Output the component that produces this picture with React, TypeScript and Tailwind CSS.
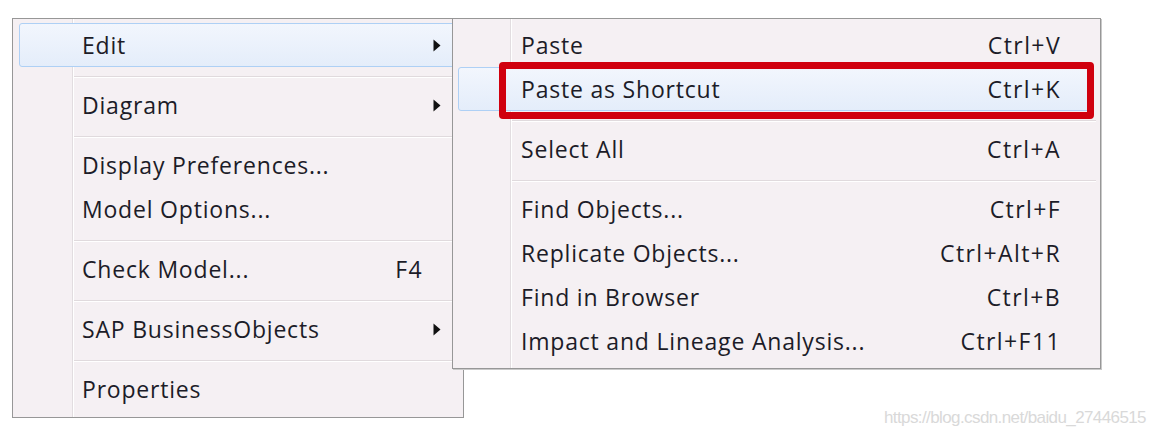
import React from 'react';

type Item =
  | { kind: 'sep' }
  | { kind: 'item'; label: string; shortcut?: string; sub?: boolean; active?: boolean };

const mainItems: Item[] = [
  { kind: 'item', label: 'Edit', sub: true, active: true },
  { kind: 'sep' },
  { kind: 'item', label: 'Diagram', sub: true },
  { kind: 'sep' },
  { kind: 'item', label: 'Display Preferences...' },
  { kind: 'item', label: 'Model Options...' },
  { kind: 'sep' },
  { kind: 'item', label: 'Check Model...', shortcut: 'F4' },
  { kind: 'sep' },
  { kind: 'item', label: 'SAP BusinessObjects', sub: true },
  { kind: 'sep' },
  { kind: 'item', label: 'Properties' },
];

const editItems: Item[] = [
  { kind: 'item', label: 'Paste', shortcut: 'Ctrl+V' },
  { kind: 'item', label: 'Paste as Shortcut', shortcut: 'Ctrl+K', active: true },
  { kind: 'sep' },
  { kind: 'item', label: 'Select All', shortcut: 'Ctrl+A' },
  { kind: 'sep' },
  { kind: 'item', label: 'Find Objects...', shortcut: 'Ctrl+F' },
  { kind: 'item', label: 'Replicate Objects...', shortcut: 'Ctrl+Alt+R' },
  { kind: 'item', label: 'Find in Browser', shortcut: 'Ctrl+B' },
  { kind: 'item', label: 'Impact and Lineage Analysis...', shortcut: 'Ctrl+F11' },
];

function Arrow() {
  return (
    <svg width="8" height="13" viewBox="0 0 8 13">
      <path d="M0.5 0.5 L7.5 6.5 L0.5 12.5 Z" fill="#111" />
    </svg>
  );
}

function Separator({ className }: { className: string }) {
  return (
    <div className={`h-[16px] pt-[9px] ${className}`}>
      <div className="h-px bg-[#e0dadd]" />
      <div className="h-px bg-white" />
    </div>
  );
}

function MainMenu() {
  return (
    <div className="w-[452px] h-[400px] border border-[#979797] bg-[#f5f0f3] pt-[4px] bg-[linear-gradient(to_right,transparent_59px,#e2dde0_59px,#e2dde0_60px,#ffffff_60px,#ffffff_61px,transparent_61px)]">
      {mainItems.map((it, i) =>
        it.kind === 'sep' ? (
          <Separator key={i} className="ml-[61px] mr-[11px]" />
        ) : (
          <div
            key={i}
            className={`mx-[6px] h-[44px] flex items-center pl-[62px] pr-[15px] rounded-[3px] border ${
              it.active
                ? 'border-[#aed0f5] bg-[linear-gradient(to_bottom,#f2f6fd,#e4edfa)]'
                : 'border-transparent'
            }`}
          >
            <span className="flex-1">{it.label}</span>
            {it.shortcut && <span className="tracking-[1.4px] mr-[-1px]">{it.shortcut}</span>}
            <span className="w-[19px] flex justify-end">{it.sub && <Arrow />}</span>
          </div>
        )
      )}
    </div>
  );
}

function EditMenu() {
  return (
    <div className="absolute left-[452px] top-[18px] w-[649px] h-[351px] border border-[#979797] shadow-[1px_1px_0_#c9c9c9] bg-[#f5f0f3] pt-[4px] bg-[linear-gradient(to_right,transparent_57px,#e2dde0_57px,#e2dde0_58px,#ffffff_58px,#ffffff_59px,transparent_59px)]">
      {editItems.map((it, i) =>
        it.kind === 'sep' ? (
          <Separator key={i} className="ml-[59px] mr-[4px]" />
        ) : (
          <div
            key={i}
            className={`ml-[5px] mr-[6px] h-[44px] flex items-center pl-[62px] pr-[33px] rounded-[3px] border ${
              it.active
                ? 'border-[#aed0f5] bg-[linear-gradient(to_bottom,#f2f6fd,#e4edfa)]'
                : 'border-transparent'
            }`}
          >
            <span className="flex-1">{it.label}</span>
            {it.shortcut && <span className="tracking-[1.4px] mr-[-1px]">{it.shortcut}</span>}
          </div>
        )
      )}
    </div>
  );
}

export default function App() {
  return (
    <div className="relative w-[1156px] h-[436px] bg-white overflow-hidden font-['Open_Sans',sans-serif] text-[23px] font-medium tracking-[0.8px] text-[#1c1c28]">
      <div className="pl-[12px] pt-[18px]">
        <MainMenu />
      </div>
      <EditMenu />
      <div className="absolute left-[499px] top-[62px] w-[595px] h-[57px] border-[7px] border-[#d0000e] rounded-[4px]" />
      <div className="absolute left-[884px] top-[405px] font-['Liberation_Sans',sans-serif] font-normal text-[17px] tracking-[-0.6px] text-[#d9d9d9]">
        https://blog.csdn.net/baidu_27446515
      </div>
    </div>
  );
}
